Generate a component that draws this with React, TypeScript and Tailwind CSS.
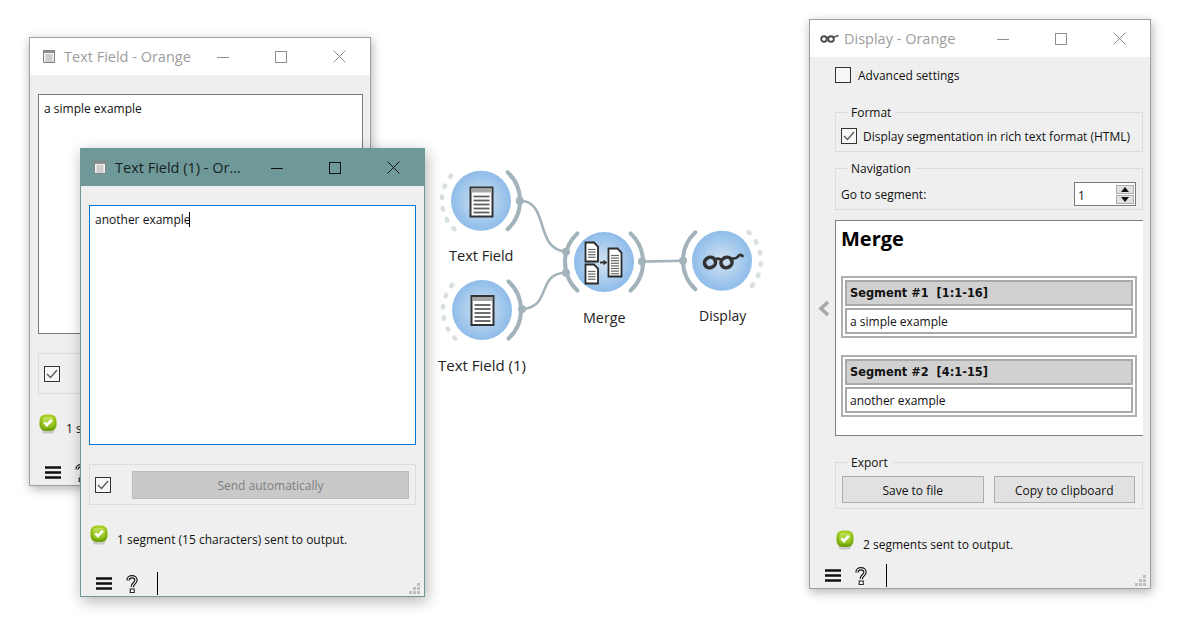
import type { ReactNode } from 'react';

const arc = (cx: number, cy: number, r: number, a0: number, a1: number) => {
  const p = (a: number) => `${cx + r * Math.cos((a * Math.PI) / 180)} ${cy + r * Math.sin((a * Math.PI) / 180)}`;
  return `M${p(a0)} A${r} ${r} 0 0 1 ${p(a1)}`;
};

const STEEL = '#a3b3bb';

function Doc({ x, y, w, h }: { x: number; y: number; w: number; h: number }) {
  const lines = [];
  for (let ly = y + 7; ly < y + h - 2; ly += 2.6) lines.push(ly);
  return (
    <g>
      <path d={`M${x} ${y} H${x + w - 4} L${x + w} ${y + 4} V${y + h} H${x} Z`} fill="#fff" stroke="#2a2a2a" strokeWidth="1.8" />
      {lines.map((ly) => (
        <path key={ly} d={`M${x + 2.5} ${ly} H${x + w - 2.5}`} stroke="#666" strokeWidth="1.2" />
      ))}
    </g>
  );
}

function FieldGlyph({ cx, cy }: { cx: number; cy: number }) {
  const x = cx - 11;
  const y = cy - 14;
  return (
    <g>
      <rect x={x} y={y} width="22" height="29" fill="#fff" stroke="#333" strokeWidth="2" />
      <rect x={x + 1} y={y + 1} width="20" height="4" fill="#a6a6a6" />
      {[9, 13, 17, 21, 25].map((d) => (
        <path key={d} d={`M${x + 3} ${y + d} H${x + 19}`} stroke="#5f5f5f" strokeWidth="1.8" />
      ))}
    </g>
  );
}

function Node({ cx, cy, input, output, children }: { cx: number; cy: number; input: 'solid' | 'dash'; output: 'solid' | 'dash'; children: ReactNode }) {
  const solid = { fill: 'none', stroke: STEEL, strokeWidth: 4, strokeLinecap: 'round' as const };
  const dash = { fill: 'none', stroke: '#d9e0e3', strokeWidth: 4.5, strokeLinecap: 'round' as const, strokeDasharray: '1.5 10' };
  return (
    <g>
      <path d={arc(cx, cy, 39, 133, 227)} {...(input === 'solid' ? solid : dash)} />
      <path d={arc(cx, cy, 39, -47, 47)} {...(output === 'solid' ? solid : dash)} />
      <circle cx={cx} cy={cy} r="30" fill="url(#nodeFill)" />
      {children}
    </g>
  );
}

function Canvas() {
  return (
    <svg className="absolute left-0 top-0" width="1179" height="635" viewBox="0 0 1179 635" fill="none">
      <defs>
        <radialGradient id="nodeFill">
          <stop offset="0%" stopColor="#d3e3f3" />
          <stop offset="100%" stopColor="#8ebce9" />
        </radialGradient>
      </defs>
      <path d="M520 200.7 C550 201 534 250 566 251.7" stroke={STEEL} strokeWidth="2.6" />
      <path d="M522 309 C552 308 536 273 566 272.7" stroke={STEEL} strokeWidth="2.6" />
      <path d="M642 261.6 L683 260.8" stroke={STEEL} strokeWidth="2.6" />
      <Node cx={481} cy={200.7} input="dash" output="solid">
        <FieldGlyph cx={481.5} cy={201.5} />
      </Node>
      <Node cx={482} cy={310} input="dash" output="solid">
        <FieldGlyph cx={482.5} cy={310} />
      </Node>
      <Node cx={604} cy={262} input="solid" output="solid">
        <Doc x={585.5} y={242.5} w={12.5} h={19} />
        <Doc x={585.5} y={264.5} w={12.5} h={19} />
        <Doc x={608.5} y={248.5} w={13} h={28} />
        <path d="M600 262.5 H604" stroke="#333" strokeWidth="2" />
        <path d="M603.5 259.8 L607.5 262.5 L603.5 265.2 Z" fill="#333" />
      </Node>
      <Node cx={722} cy={260.8} input="solid" output="dash">
        <g stroke="#333" strokeWidth="3.6" strokeLinecap="round">
          <ellipse cx="710" cy="262.5" rx="5.6" ry="5.2" transform="rotate(-25 710 262.5)" />
          <ellipse cx="726.5" cy="262.5" rx="5.6" ry="5.2" transform="rotate(-25 726.5 262.5)" />
          <path d="M715.5 259.5 C717 258.5 719 258.5 720.5 259.5" strokeWidth="2.6" />
          <path d="M731 258.5 C734 259 736.5 258.5 738 256.5 C739.5 254.5 741.5 254.5 742.5 256" strokeWidth="2.8" />
        </g>
      </Node>
      <circle cx={519.7} cy={200.7} r="4" fill={STEEL} />
      <circle cx={522} cy={309} r="4" fill={STEEL} />
      <circle cx={566} cy={251.7} r="4" fill={STEEL} />
      <circle cx={566} cy={272.7} r="4" fill={STEEL} />
      <circle cx={642} cy={261.6} r="4" fill={STEEL} />
      <circle cx={683} cy={260.8} r="4" fill={STEEL} />
    </svg>
  );
}

function WinControls({ active }: { active?: boolean }) {
  const stroke = active ? '#111' : '#8f8f8f';
  return (
    <div className="ml-auto mr-[1px] flex h-full">
      <div className="flex w-[58px] items-center justify-center">
        <svg width="12" height="12"><path d="M0 6.5 H12" stroke={stroke} /></svg>
      </div>
      <div className="flex w-[58px] items-center justify-center">
        <svg width="12" height="12"><rect x=".5" y=".5" width="11" height="11" fill="none" stroke={stroke} /></svg>
      </div>
      <div className="flex w-[59px] items-center justify-center">
        <svg width="13" height="13"><path d="M.5 .5 L12.5 12.5 M12.5 .5 L.5 12.5" stroke={stroke} /></svg>
      </div>
    </div>
  );
}

function TitleDoc() {
  return (
    <svg width="12" height="13" viewBox="0 0 12 13" className="shrink-0">
      <rect x=".5" y=".5" width="11" height="12" fill="#f2f2f2" stroke="#858585" />
      <rect x="1" y="1" width="10" height="2" fill="#8f8f8f" />
      <path d="M2.5 5 H9.5 M2.5 7 H9.5 M2.5 9 H9.5 M2.5 11 H9.5" stroke="#a8a8a8" />
    </svg>
  );
}

function TitleGlasses() {
  return (
    <svg width="19" height="9" viewBox="0 0 19 9" fill="none" className="-ml-[3px] -mr-[4px] shrink-0">
      <ellipse cx="4" cy="5" rx="2.8" ry="2.8" stroke="#4a4a4a" strokeWidth="1.9" />
      <ellipse cx="11" cy="5" rx="2.8" ry="2.8" stroke="#4a4a4a" strokeWidth="1.9" />
      <path d="M6.5 3.5 H8.5 M13.5 3 C15.5 3.5 16.5 1 18.5 2" stroke="#4a4a4a" strokeWidth="1.5" />
    </svg>
  );
}

function Win({ title, icon, active, className, children }: { title: string; icon: ReactNode; active?: boolean; className: string; children: ReactNode }) {
  return (
    <div className={`absolute flex flex-col ${className}`}>
      <div className={active ? 'flex h-[37px] shrink-0 items-center bg-[#6f9998] pl-[13px]' : 'flex h-[37px] shrink-0 items-center bg-white pl-[13px]'}>
        {icon}
        <span className={active ? 'ml-[9px] whitespace-nowrap text-[14.5px] text-[#151f1f]' : 'ml-[9px] whitespace-nowrap text-[14.5px] text-[#9d9d9d]'}>{title}</span>
        <WinControls active={active} />
      </div>
      <div className="relative flex min-h-0 flex-1 flex-col bg-[#efefef]">{children}</div>
    </div>
  );
}

function Checkbox({ checked }: { checked?: boolean }) {
  return (
    <span className="flex h-[16px] w-[16px] shrink-0 items-center justify-center border border-[#333] bg-[#f6f6f6]">
      {checked && (
        <svg width="12" height="10" viewBox="0 0 12 10" fill="none">
          <path d="M1 5 L4.5 8.5 L11 1" stroke="#555" strokeWidth="1.2" />
        </svg>
      )}
    </span>
  );
}

function StatusOk() {
  return (
    <svg width="18" height="20" viewBox="0 0 18 20" className="shrink-0">
      <defs>
        <linearGradient id="okFill" x1="0" y1="0" x2="0" y2="1">
          <stop offset="0%" stopColor="#a8d01e" />
          <stop offset="100%" stopColor="#6d9f08" />
        </linearGradient>
        <linearGradient id="okInner" x1="0" y1="0" x2="0" y2="1">
          <stop offset="0%" stopColor="#c4e25a" />
          <stop offset="100%" stopColor="#86bb12" />
        </linearGradient>
      </defs>
      <rect x="3" y="15" width="12" height="4.5" rx="2" fill="#c9c9c9" />
      <rect x=".5" y=".5" width="17" height="16.5" rx="6" fill="url(#okFill)" />
      <rect x="3" y="2.8" width="12" height="11.5" rx="4" fill="url(#okInner)" />
      <path d="M5.3 8.3 L8 11 L12.8 5.8" fill="none" stroke="#fff" strokeWidth="2.6" />
    </svg>
  );
}

function BottomBar() {
  return (
    <div className="mt-auto flex h-[24px] items-center pl-[15px] pb-[1px]">
      <svg width="16" height="13" className="shrink-0">
        <path d="M0 1.5 H16 M0 6.5 H16 M0 11.5 H16" stroke="#111" strokeWidth="2.4" />
      </svg>
      <svg width="14" height="18" viewBox="0 0 14 18" fill="none" className="ml-[13px] shrink-0">
        <path d="M3 5.5 C3 2.5 5 1.8 7 1.8 C9.5 1.8 11 3.4 11 5.3 C11 8 7.5 8.2 7.2 12" stroke="#111" strokeWidth="3.4" />
        <path d="M3 5.5 C3 2.5 5 1.8 7 1.8 C9.5 1.8 11 3.4 11 5.3 C11 8 7.5 8.2 7.2 12" stroke="#fff" strokeWidth="1.1" />
        <rect x="5.2" y="14" width="4" height="3.6" fill="#fff" stroke="#111" />
      </svg>
      <span className="ml-[18px] h-[23px] w-px bg-black" />
      <svg width="11" height="11" className="absolute bottom-[2px] right-[4px]" fill="#bdbdbd">
        <rect x="8" y="0" width="3" height="3" />
        <rect x="4" y="4" width="3" height="3" />
        <rect x="8" y="4" width="3" height="3" />
        <rect x="0" y="8" width="3" height="3" />
        <rect x="4" y="8" width="3" height="3" />
        <rect x="8" y="8" width="3" height="3" />
      </svg>
    </div>
  );
}

function TextFieldBody({ text, status, caret, focus, className }: { text: string; status: string; caret?: boolean; focus?: boolean; className: string }) {
  return (
    <>
      <div className={`flex flex-col pt-[19px] ${className}`}>
        <div className={focus ? 'h-[240px] border border-[#0078d7] bg-white px-[5px] pt-[6px]' : 'h-[240px] border border-[#7a7a7a] bg-white px-[5px] pt-[6px]'}>
          {text}
          {caret && <span className="-ml-[2px] inline-block h-[15px] w-px align-top bg-black" />}
        </div>
        <div className="mt-[19px] flex h-[41px] items-center border border-[#dcdcdc] pl-[5px] pr-[6px]">
          <Checkbox checked />
          <div className="ml-[21px] flex h-[28px] flex-1 items-center justify-center border border-[#bcbcbc] bg-[#c9c9c9] pt-[2px] text-[#7f7f7f]">Send automatically</div>
        </div>
        <div className="ml-[1px] mt-[20px] flex items-start">
          <StatusOk />
          <span className="ml-[9px] mt-[7px] whitespace-nowrap">{status}</span>
        </div>
      </div>
      <BottomBar />
    </>
  );
}

function Group({ label, className, children }: { label: string; className: string; children: ReactNode }) {
  return (
    <fieldset className={`border border-[#dcdcdc] ${className}`}>
      <legend className="ml-[12px] px-[4px] leading-[16px]">
        <span className="inline-block translate-x-[-1px] translate-y-[1px]">{label}</span>
      </legend>
      {children}
    </fieldset>
  );
}

function SegmentTable({ heading, body, className }: { heading: string; body: string; className?: string }) {
  return (
    <div className={`flex flex-col gap-[2px] border-2 border-[#b0b0b0] p-[2px] ${className ?? ''}`}>
      <div className="flex h-[26px] items-center whitespace-pre border-2 border-[#a9a9a9] bg-[#d1d1d1] px-[3px] font-['DejaVu_Sans',sans-serif] text-[11.4px] font-bold">{heading}</div>
      <div className="flex h-[26px] items-center border-2 border-[#a9a9a9] bg-white px-[3px] pt-[2px]">{body}</div>
    </div>
  );
}

function DisplayBody() {
  return (
    <>
      <div className="flex">
        <div className="w-[25px] shrink-0 pl-[8px] pt-[243px]">
          <svg width="12" height="17" fill="none">
            <path d="M10 2 L3 8.5 L10 15" stroke="#a8a8a8" strokeWidth="3.6" />
          </svg>
        </div>
        <div className="flex w-[308px] flex-col">
          <div className="mt-[10px] flex items-center gap-[7px]">
            <Checkbox />
            <span className="translate-y-[1px]">Advanced settings</span>
          </div>
          <Group label="Format" className="mt-[21px] h-[48px]">
            <div className="flex items-center gap-[6px] pl-[5px] pt-[8px]">
              <Checkbox checked />
              <span className="translate-y-[1px]">Display segmentation in rich text format (HTML)</span>
            </div>
          </Group>
          <Group label="Navigation" className="mt-[8px] h-[50px]">
            <div className="flex items-center justify-between pl-[5px] pr-[6px] pt-[6px]">
              <span className="translate-y-[1px]">Go to segment:</span>
              <div className="flex h-[24px] w-[62px] items-center justify-between border border-[#7a7a7a] bg-white pl-[3px] pr-[1px]">
                <span className="pt-[4px]">1</span>
                <div className="flex flex-col gap-[1px]">
                  <span className="flex h-[9px] w-[18px] items-center justify-center border border-[#adadad] bg-[#e1e1e1]">
                    <svg width="8" height="5"><path d="M4 0 L8 5 H0 Z" fill="#111" /></svg>
                  </span>
                  <span className="flex h-[9px] w-[18px] items-center justify-center border border-[#adadad] bg-[#e1e1e1]">
                    <svg width="8" height="5"><path d="M0 0 H8 L4 5 Z" fill="#111" /></svg>
                  </span>
                </div>
              </div>
            </div>
          </Group>
          <div className="mt-[10px] flex h-[216px] flex-col border-y border-l border-[#7f7f7f] bg-white pl-[5px] pr-[6px]">
            <div className="mt-[4px] text-[20px] font-bold leading-[28px] text-black">Merge</div>
            <SegmentTable heading="Segment #1  [1:1-16]" body="a simple example" className="mt-[23px]" />
            <SegmentTable heading="Segment #2  [4:1-15]" body="another example" className="mt-[17px]" />
          </div>
          <Group label="Export" className="mt-[18px] h-[55px]">
            <div className="flex gap-[10px] pl-[6px] pr-[7px] pt-[6px]">
              <div className="flex h-[27px] flex-1 items-center justify-center border border-[#adadad] bg-[#e1e1e1] pt-[2px]">Save to file</div>
              <div className="flex h-[27px] flex-1 items-center justify-center border border-[#adadad] bg-[#e1e1e1] pt-[2px]">Copy to clipboard</div>
            </div>
          </Group>
          <div className="ml-[1px] mt-[21px] flex items-start">
            <StatusOk />
            <span className="ml-[9px] mt-[7px] whitespace-nowrap">2 segments sent to output.</span>
          </div>
        </div>
      </div>
      <BottomBar />
    </>
  );
}

export default function App() {
  return (
    <div className="relative h-[635px] w-[1179px] overflow-hidden bg-white font-['Open_Sans','Noto_Sans',sans-serif] text-[12px] leading-[16px] text-[#111]">
      <Canvas />
      <span className="absolute left-[449px] top-[247px] whitespace-nowrap text-[14.5px] leading-[18px] text-[#222]">Text Field</span>
      <span className="absolute left-[438px] top-[356px] whitespace-nowrap text-[15px] leading-[18px] text-[#222]">Text Field (1)</span>
      <span className="absolute left-[583px] top-[309px] whitespace-nowrap text-[14.3px] leading-[18px] text-[#222]">Merge</span>
      <span className="absolute left-[699px] top-[307px] whitespace-nowrap text-[14px] leading-[18px] text-[#222]">Display</span>

      <Win
        title="Text Field - Orange"
        icon={<TitleDoc />}
        className="left-[29px] top-[37px] h-[449px] w-[342px] border border-[#a0a0a0] shadow-[1px_3px_10px_rgba(0,0,0,0.3)]"
      >
        <TextFieldBody className="pl-[8px] pr-[7px]" text="a simple example" status="1 segment (16 characters) sent to output." />
      </Win>
      <Win
        active
        title="Text Field (1) - Or..."
        icon={<TitleDoc />}
        className="left-[80px] top-[148px] h-[449px] w-[345px] border border-[#6f9998] shadow-[2px_4px_14px_rgba(0,0,0,0.3)]"
      >
        <TextFieldBody className="px-[8px]" text="another example" status="1 segment (15 characters) sent to output." caret focus />
      </Win>
      <Win
        title="Display - Orange"
        icon={<TitleGlasses />}
        className="left-[809px] top-[19px] h-[570px] w-[342px] border border-[#a0a0a0] shadow-[1px_3px_10px_rgba(0,0,0,0.3)]"
      >
        <DisplayBody />
      </Win>
    </div>
  );
}
